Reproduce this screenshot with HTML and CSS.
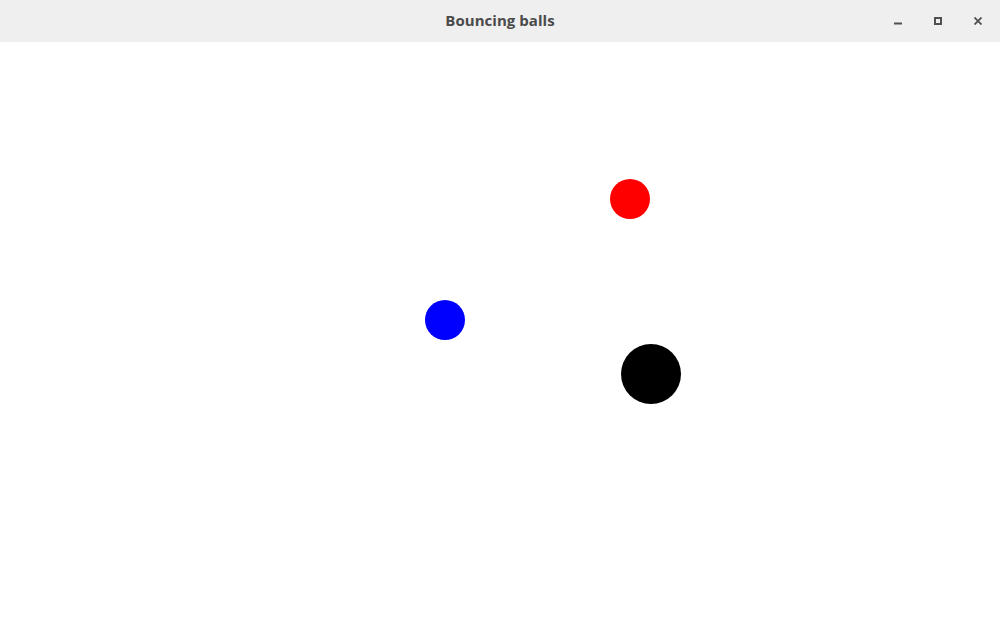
FILE: index.html
```html
<!DOCTYPE html>
<html>
<head>
<meta charset="utf-8">
<link rel="stylesheet" href="styles.css">
<title>Bouncing balls</title>
</head>
<body>
<div class="window">
  <header class="titlebar">
    <div class="title">Bouncing balls</div>
    <div class="controls">
      <span class="btn"><svg width="8" height="8" viewBox="0 0 8 8"><rect x="0" y="5.5" width="8" height="2" fill="#505050"/></svg></span>
      <span class="btn"><svg width="8" height="8" viewBox="0 0 8 8"><rect x="1" y="1" width="6" height="6" fill="none" stroke="#505050" stroke-width="2"/></svg></span>
      <span class="btn"><svg width="8" height="8" viewBox="0 0 8 8"><path d="M0.5 0.5L7.5 7.5M7.5 0.5L0.5 7.5" stroke="#505050" stroke-width="1.8"/></svg></span>
    </div>
  </header>
  <main class="canvas">
    <div class="ball red"></div>
    <div class="ball blue"></div>
    <div class="ball black"></div>
  </main>
</div>
</body>
</html>
```
FILE: styles.css
```css
html, body {
  margin: 0;
  padding: 0;
  background: #ffffff;
}
.window {
  width: 1000px;
  height: 642px;
  display: flex;
  flex-direction: column;
}
.titlebar {
  height: 42px;
  flex: 0 0 42px;
  background: #efefef;
  position: relative;
  display: flex;
  align-items: center;
  justify-content: center;
}
.title {
  font-family: "Open Sans", "DejaVu Sans", sans-serif;
  font-weight: 700;
  font-size: 15px;
  color: #4a4a4a;
  letter-spacing: 0.05px;
  line-height: 1;
  margin-top: -1px;
}
.controls {
  position: absolute;
  right: 18px;
  top: 17px;
  display: flex;
  gap: 32px;
}
.btn {
  width: 8px;
  height: 8px;
  display: block;
}
.btn svg {
  display: block;
}
.canvas {
  flex: 1;
  position: relative;
  background: #ffffff;
}
.ball {
  position: absolute;
  border-radius: 50%;
}
.red {
  width: 40px;
  height: 40px;
  left: 610px;
  top: 137px;
  background: #ff0000;
}
.blue {
  width: 40px;
  height: 40px;
  left: 425px;
  top: 258px;
  background: #0000ff;
}
.black {
  width: 60px;
  height: 60px;
  left: 621px;
  top: 302px;
  background: #000000;
}
```
